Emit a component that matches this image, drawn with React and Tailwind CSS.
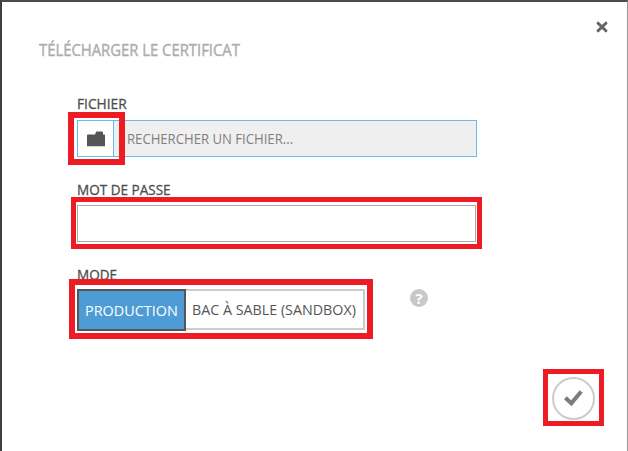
import React from "react";

function Label({ children, className = "" }) {
  return (
    <span className={`block h-5 w-max origin-left whitespace-nowrap leading-5 ${className}`}>
      {children}
    </span>
  );
}

function Highlight({ className }) {
  return <div className={`pointer-events-none absolute border-[#ed1c24] ${className}`} />;
}

export default function App() {
  return (
    <div className="h-[451px] w-[628px] overflow-hidden border-l-2 border-r border-t-2 border-l-[#3f3f41] border-r-[#999] border-t-[#4c4a4c] bg-white font-['Open_Sans','Noto_Sans',sans-serif] text-[#4d4d4d]">
      <header className="flex h-[92px] items-start justify-between pl-[37px] pr-[18px] pt-[18px]">
        <h1 className="pt-5">
          <Label className="scale-x-[0.957] text-[15.5px] text-[#adadad] [-webkit-text-stroke:0.4px_#adadad]">TÉLÉCHARGER LE CERTIFICAT</Label>
        </h1>
        <button aria-label="Fermer" className="h-3.5 w-3.5">
          <svg viewBox="0 0 14 14" className="h-3.5 w-3.5" stroke="#656565" strokeWidth="3" strokeLinecap="round">
            <path d="M3.1 3.2L10.9 10.8M10.9 3.2L3.1 10.8" />
          </svg>
        </button>
      </header>

      <main className="flex flex-col pl-[75px]">
        <section className="relative h-[86px]">
          <Label className="scale-x-[0.98] text-sm [-webkit-text-stroke:0.3px_#4d4d4d]">FICHIER</Label>
          <div className="mt-1.5 flex h-[37px] w-[400px] border border-[#6bb9f0] bg-[#efefef]">
            <button aria-label="Parcourir" className="flex w-9 items-center justify-center border-r border-[#6bb9f0] bg-white">
              <svg viewBox="0 0 18 16" className="h-4 w-[18px]" fill="#555">
                <path d="M0 4.2Q0 3.4.8 3.4H8L9 1Q9.2.5 9.8.5H15Q16 .5 16 1.5V3.4H17.3Q18 3.4 18 4.2V15.3H0Z" />
              </svg>
            </button>
            <div className="flex items-center pl-[13px] pt-px">
              <Label className="scale-x-[0.905] text-[14.5px] text-[#808080]">RECHERCHER UN FICHIER...</Label>
            </div>
          </div>
          <Highlight className="-left-[9px] top-[17.5px] h-[53px] w-[57px] border-6" />
        </section>

        <section className="relative h-[85px]">
          <Label className="scale-x-[0.967] text-sm [-webkit-text-stroke:0.3px_#4d4d4d]">MOT DE PASSE</Label>
          <div className="mt-[5px] h-[37px] w-[399px] border border-[#aaa]" />
          <Highlight className="-left-[6px] top-[17px] h-[52px] w-[411px] border-5" />
        </section>

        <section className="relative flex h-[104px]">
          <div className="w-[333px]">
            <Label className="scale-x-[0.967] text-sm [-webkit-text-stroke:0.3px_#4d4d4d]">MODE</Label>
            <div className="mt-1 flex h-[42px] w-[288px]">
              <button className="flex w-[109px] shrink-0 items-center border-2 border-[#555] bg-[#4d9cd6] pl-1.5">
                <Label className="scale-x-[0.96] text-[15px] text-white">PRODUCTION</Label>
              </button>
              <button className="flex h-[41px] w-[179px] items-center border-2 border-l-0 border-[#ccc] pb-px pl-1.5">
                <Label className="scale-x-[0.952] text-[15px] text-[#555]">BAC À SABLE (SANDBOX)</Label>
              </button>
            </div>
          </div>
          <span className="mt-[24px] flex h-[18px] w-[18px] items-center justify-center rounded-full bg-[#c8c8c8] text-[15px] font-bold leading-none text-white">?</span>
          <Highlight className="-left-[8px] top-[14px] h-[60px] w-[304px] border-6" />
        </section>
      </main>

      <footer className="flex justify-end pr-[23px]">
        <div className="flex h-[57px] w-[61px] items-center justify-center border-5 border-[#ed1c24] pt-px">
          <button aria-label="Valider" className="flex h-[43px] w-[43px] shrink-0 items-center justify-center rounded-full border-2 border-[#ccc]">
            <svg viewBox="0 0 20 18" className="h-[18px] w-5" fill="none" stroke="#7c7c7c" strokeWidth="4">
              <path d="M1.4 8.8L7.3 14.3L17.2 2.5" />
            </svg>
          </button>
        </div>
      </footer>
    </div>
  );
}
